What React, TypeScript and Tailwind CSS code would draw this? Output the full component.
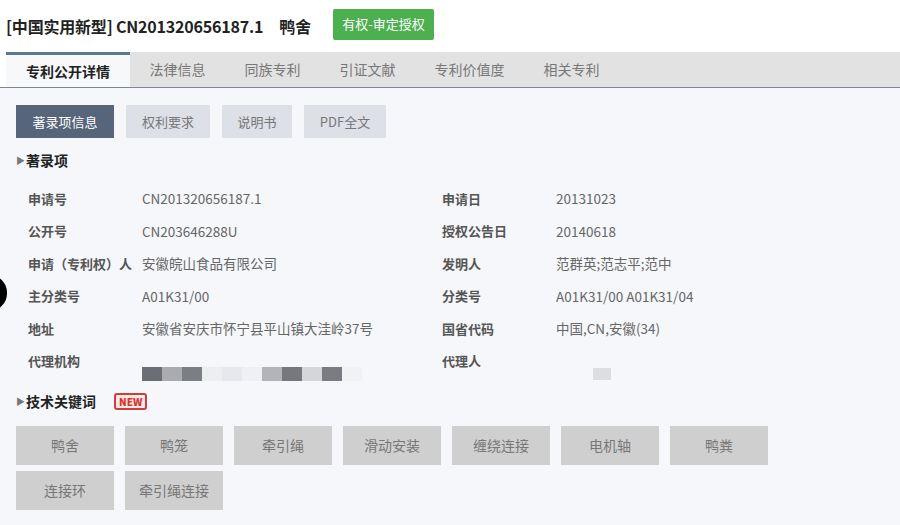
import React from "react";

const TABS = ["专利公开详情", "法律信息", "同族专利", "引证文献", "专利价值度", "相关专利"];
const SUB_TABS = [
  { label: "著录项信息", w: "w-[98px]" },
  { label: "权利要求", w: "w-[84px]" },
  { label: "说明书", w: "w-[70px]" },
  { label: "PDF全文", w: "w-[82px]" },
];

const ROWS: [string, React.ReactNode, string, React.ReactNode][] = [
  ["申请号", "CN201320656187.1", "申请日", "20131023"],
  ["公开号", "CN203646288U", "授权公告日", "20140618"],
  ["申请（专利权）人", "安徽皖山食品有限公司", "发明人", "范群英;范志平;范中"],
  ["主分类号", "A01K31/00", "分类号", "A01K31/00 A01K31/04"],
  ["地址", "安徽省安庆市怀宁县平山镇大洼岭37号", "国省代码", "中国,CN,安徽(34)"],
  ["代理机构", null, "代理人", null],
];

const KEYWORDS = ["鸭舍", "鸭笼", "牵引绳", "滑动安装", "缠绕连接", "电机轴", "鸭粪", "连接环", "牵引绳连接"];

// mosaic blur used where the agency name was hidden
const MOSAIC = ["#6b6e75", "#a9abb0", "#7b7e85", "#eceef2", "#e6e8ee", "#eef0f5", "#b2b4b8", "#76787d", "#d4d6da", "#7a7c81", "#f1f2f4"];

function SectionTitle({ children }: { children: React.ReactNode }) {
  return (
    <div className="flex items-center text-[14px] font-bold text-[#222]">
      <span className="text-[9px] text-[#777] mr-[1px]">▶</span>
      {children}
    </div>
  );
}

export default function App() {
  return (
    <div
      className="relative w-[900px] h-[525px] overflow-hidden bg-white"
      style={{ fontFamily: '"Noto Sans CJK SC", "Noto Sans", sans-serif' }}
    >
      {/* title */}
      <div className="h-[52px] flex items-center pl-[6px]">
        <span className="text-[16px] font-bold text-[#222] tracking-[-0.2px]">[中国实用新型] CN201320656187.1</span>
        <span className="text-[16px] font-bold text-[#222] ml-[16px]">鸭舍</span>
        <span className="ml-[22px] h-[31px] px-[9px] flex items-center bg-[#4caf50] text-white text-[13px] rounded-[2px] mt-[-4px]">
          有权-审定授权
        </span>
      </div>

      {/* tabs */}
      <div className="flex h-[36px] bg-[#e2e2e2] border-b border-[#7c8794]">
        <div className="w-[6px] bg-white" />
        {TABS.map((t, i) =>
          i === 0 ? (
            <div
              key={t}
              className="w-[124px] flex items-center justify-center bg-[#f7f8fa] border-t-[3px] border-[#5b7891] text-[14px] font-bold text-[#222]"
            >
              {t}
            </div>
          ) : (
            <div key={t} className="px-[19.5px] flex items-center text-[14px] text-[#777]">
              {t}
            </div>
          )
        )}
      </div>

      <div className="bg-[#f5f7fb] h-full pl-[16px] pt-[17px]">
        {/* sub tabs */}
        <div className="flex gap-[12px]">
          {SUB_TABS.map((s, i) => (
            <div
              key={s.label}
              className={`${s.w} h-[33px] flex items-center justify-center text-[13px] ${
                i === 0 ? "bg-[#56657a] text-white" : "bg-[#dde0e6] text-[#777]"
              }`}
            >
              {s.label}
            </div>
          ))}
        </div>

        <div className="mt-[12px]">
          <SectionTitle>著录项</SectionTitle>
        </div>

        <div className="mt-[11px] pl-[12px]">
          {ROWS.map(([l1, v1, l2, v2]) => (
            <div key={l1} className="flex h-[32.5px] items-center text-[13px]">
              <div className="w-[114px] font-bold text-[#555] whitespace-nowrap">{l1}</div>
              <div className="w-[300px] text-[#666] text-[13.5px]">
                {v1 ?? (
                  <div className="flex mt-[26px]">
                    {MOSAIC.map((c, i) => (
                      <div key={i} className="w-[20px] h-[14px]" style={{ backgroundColor: c }} />
                    ))}
                  </div>
                )}
              </div>
              <div className="w-[114px] font-bold text-[#555]">{l2}</div>
              <div className="text-[#666] text-[13.5px]">
                {v2 ?? <div className="ml-[37px] mt-[26px] w-[18px] h-[12px] bg-[#dcdee2]" />}
              </div>
            </div>
          ))}
        </div>

        <div className="mt-[14px] flex items-center">
          <SectionTitle>技术关键词</SectionTitle>
          <span className="ml-[18px] px-[3px] h-[17px] flex items-center border-[2px] border-[#c9413c] rounded-[3px] bg-[#fbe9e8] text-[#d6332d] text-[10px] font-extrabold leading-none">
            NEW
          </span>
        </div>

        <div className="mt-[14px] grid grid-cols-[repeat(7,98px)] gap-x-[11px] gap-y-[6px]">
          {KEYWORDS.map((k) => (
            <div key={k} className="h-[39px] flex items-center justify-center bg-[#cfcfcf] text-[14px] text-[#777]">
              {k}
            </div>
          ))}
        </div>
      </div>

      {/* stray round mark on the left edge */}
      <div className="absolute left-[-28px] top-[275px] w-[35px] h-[36px] rounded-full bg-black" />
    </div>
  );
}
